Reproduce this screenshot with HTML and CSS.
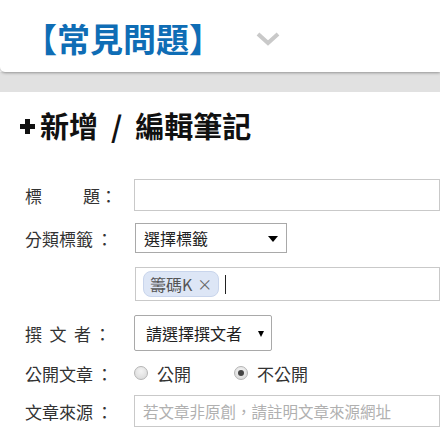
FILE: index.html
```html
<!DOCTYPE html>
<html lang="zh-Hant">
<head>
    <meta charset="UTF-8">
    <meta name="viewport" content="width=device-width, initial-scale=1.0">
    <title>新增 / 編輯筆記</title>
    <link rel="stylesheet" href="styles.css">
</head>
<body>
    <div class="topbar">
        <div class="brand">【常見問題】</div>
        <svg class="chev" width="24" height="14" viewBox="0 0 24 14">
            <path d="M2 2 L12 11 L22 2" fill="none" stroke="#c9c9c9" stroke-width="4"/>
        </svg>
    </div>
    <div class="band"></div>
    <div class="panel">
        <h2 class="heading"><span class="plus"></span>新增<span class="slash">/</span>編輯筆記</h2>
        <form class="note-form">
            <div class="row row-title">
                <label class="lbl"><span class="lbl-text wide">標題</span><span class="colon">：</span></label>
                <input type="text" class="field">
            </div>
            <div class="row row-cat">
                <label class="lbl"><span class="lbl-text">分類標籤</span><span class="colon">：</span></label>
                <div class="pick pick-tag">選擇標籤<span class="caret"></span></div>
            </div>
            <div class="row row-tags">
                <span class="lbl"></span>
                <div class="field tagbox">
                    <span class="chip">籌碼K<span class="chip-x">×</span></span>
                    <span class="cursor"></span>
                </div>
            </div>
            <div class="row row-author">
                <label class="lbl"><span class="lbl-text short">撰文者</span><span class="colon">：</span></label>
                <div class="pick pick-author">請選擇撰文者<span class="caret small"></span></div>
            </div>
            <div class="row row-public">
                <label class="lbl"><span class="lbl-text">公開文章</span><span class="colon">：</span></label>
                <span class="radio"></span><span class="opt">公開</span>
                <span class="radio on"></span><span class="opt">不公開</span>
            </div>
            <div class="row row-src">
                <label class="lbl"><span class="lbl-text">文章來源</span><span class="colon">：</span></label>
                <input type="text" class="field" placeholder="若文章非原創，請註明文章來源網址">
            </div>
        </form>
    </div>
</body>
</html>
```

FILE: styles.css
```css
body {
    margin: 0;
    background-color: #ffffff;
    font-family: "Noto Sans CJK TC", "Liberation Sans", sans-serif;
    overflow: hidden;
}
.topbar {
    height: 72px;
    background-color: #ffffff;
    border-radius: 0 0 0 5px;
    box-shadow: 0 1px 3px rgba(0, 0, 0, 0.35);
    display: flex;
    align-items: center;
    padding-left: 24px;
    position: relative;
}
.brand {
    color: #0f6db5;
    font-size: 33px;
    font-weight: bold;
    line-height: 33px;
    margin-top: 4px;
}
.chev {
    margin-left: 34px;
    margin-top: 6px;
}
.band {
    height: 20px;
    background-color: #e1e1e1;
}
.panel {
    padding-left: 20px;
}
.heading {
    margin: 15px 0 0;
    font-size: 29px;
    line-height: 36px;
    font-weight: bold;
    color: #111;
    display: flex;
    align-items: center;
}
.plus {
    width: 15px;
    height: 15px;
    margin-right: 5px;
    margin-top: 2px;
    background:
        linear-gradient(#111, #111) center / 15px 5px no-repeat,
        linear-gradient(#111, #111) center / 5px 15px no-repeat;
}
.slash {
    margin: 0 13px;
}
.note-form {
    margin-top: 36px;
    padding-left: 5px;
}
.row {
    display: flex;
    align-items: center;
}
.lbl {
    width: 109px;
    flex-shrink: 0;
    font-size: 17px;
    color: #333;
    display: flex;
    align-items: center;
}
.lbl-text {
    display: inline-block;
    width: 68px;
    text-align: justify;
    text-align-last: justify;
}
.lbl-text.short {
    width: 66px;
}
.lbl-text.wide {
    width: 75px;
}
.colon {
    margin-left: 3px;
}
.row-title .colon {
    margin-left: 0;
}
.field {
    box-sizing: border-box;
    width: 420px;
    height: 32px;
    border: 1px solid #c9c9c9;
    padding: 0 8px;
    font-family: inherit;
    font-size: 15.5px;
    outline: none;
    margin: 0;
}
.field::placeholder {
    color: #b0b0b0;
}
.row-cat {
    margin-top: 12px;
}
.pick {
    box-sizing: border-box;
    border: 1px solid #a9a9a9;
    display: flex;
    align-items: center;
    font-size: 16px;
    color: #222;
    position: relative;
}
.pick-tag {
    width: 152px;
    height: 30px;
    padding-left: 8px;
    margin-left: 1px;
}
.caret {
    position: absolute;
    right: 8px;
    top: 12px;
    border-left: 5px solid transparent;
    border-right: 5px solid transparent;
    border-top: 6px solid #000;
}
.caret.small {
    right: 7px;
    top: 15px;
    border-left-width: 3px;
    border-right-width: 3px;
    border-top-width: 6px;
}
.row-tags {
    margin-top: 14px;
}
.tagbox {
    height: 34px;
    margin-left: 1px;
    display: flex;
    align-items: center;
    padding-left: 7px;
}
.chip {
    background-color: #dde6f6;
    border: 1px solid #c9d5ec;
    border-radius: 8px;
    color: #555;
    font-size: 16px;
    height: 24px;
    line-height: 24px;
    padding: 0 6px;
    display: flex;
    align-items: center;
}
.chip-x {
    margin-left: 5px;
    font-size: 15px;
    color: #666;
}
.cursor {
    width: 1px;
    height: 19px;
    background-color: #222;
    margin-left: 6px;
}
.row-author {
    margin-top: 14px;
}
.pick-author {
    width: 138px;
    height: 36px;
    border-radius: 2px;
    padding-left: 11px;
}
.row-public {
    margin-top: 12px;
    height: 20px;
}
.radio {
    box-sizing: border-box;
    width: 14px;
    height: 14px;
    border-radius: 50%;
    border: 1px solid #b5b5b5;
    background: radial-gradient(circle at 50% 35%, #f4f4f4, #d6d6d6);
    position: relative;
}
.radio.on::after {
    content: "";
    position: absolute;
    left: 3px;
    top: 3px;
    width: 6px;
    height: 6px;
    border-radius: 50%;
    background-color: #444;
}
.opt {
    font-size: 17px;
    color: #333;
    margin-left: 9px;
    margin-right: 43px;
}
.row-src {
    margin-top: 12px;
}
```
